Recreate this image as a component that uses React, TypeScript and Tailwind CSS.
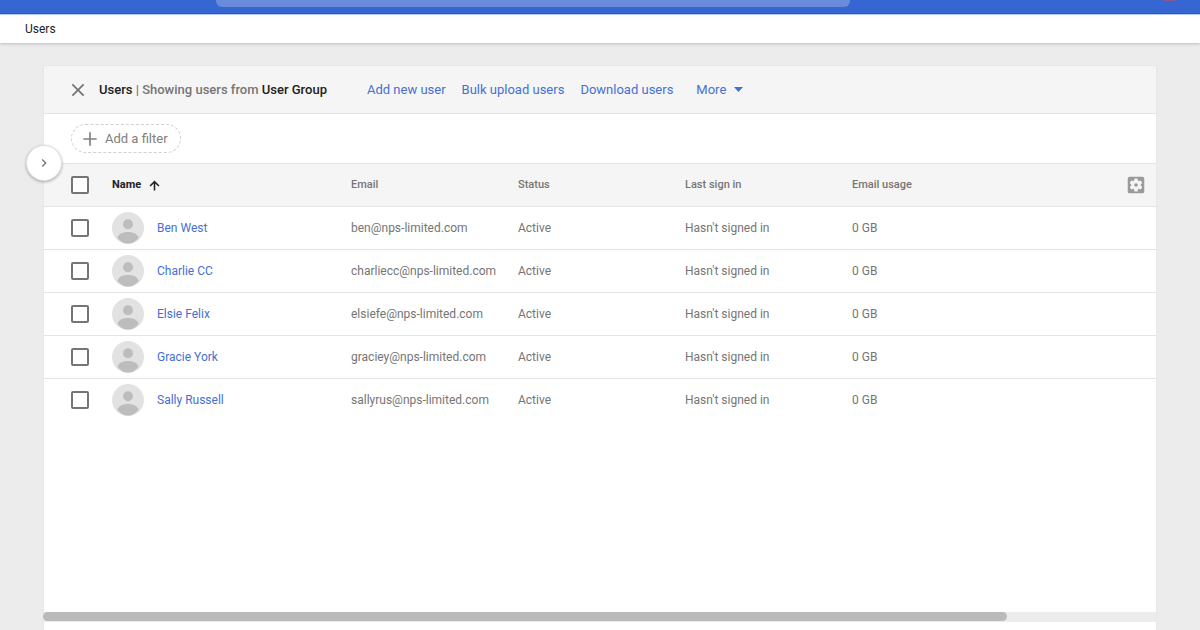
import { useState } from 'react';

type User = { name: string; email: string };

const users: User[] = [
  { name: 'Ben West', email: 'ben@nps-limited.com' },
  { name: 'Charlie CC', email: 'charliecc@nps-limited.com' },
  { name: 'Elsie Felix', email: 'elsiefe@nps-limited.com' },
  { name: 'Gracie York', email: 'graciey@nps-limited.com' },
  { name: 'Sally Russell', email: 'sallyrus@nps-limited.com' },
];

const actions = ['Add new user', 'Bulk upload users', 'Download users'];

function Icon({ d, className }: { d: string; className: string }) {
  return (
    <svg viewBox="0 0 24 24" fill="currentColor" aria-hidden="true" className={className}>
      <path d={d} />
    </svg>
  );
}

const CLOSE = 'M19.500 6L18 4.500l-6 6-6-6L4.500 6l6 6-6 6L6 19.500l6-6 6 6 1.500-1.500-6-6z';
const PLUS = 'M20 13h-7v7h-2v-7H4v-2h7V4h2v7h7z';
const CHEVRON = 'M10 6L8.59 7.41 13.17 12l-4.58 4.59L10 18l6-6z';
const ARROW_UP = 'M4 12l1.750 1.750L10.750 8.750V20h2.500V8.750l5 5L20 12l-8-8-8 8z';
const GEAR =
  'M12 10a2 2 0 100 4 2 2 0 000-4zm7-7H5a2 2 0 00-2 2v14a2 2 0 002 2h14a2 2 0 002-2V5a2 2 0 00-2-2zm-1.75 9c0 .23-.02.46-.05.68l1.48 1.16c.13.11.17.3.08.45l-1.4 2.42c-.09.15-.27.21-.43.15l-1.74-.7c-.36.28-.76.51-1.18.69l-.26 1.85c-.03.17-.18.3-.35.3h-2.8c-.17 0-.32-.13-.35-.29l-.26-1.85c-.43-.18-.82-.41-1.18-.69l-1.74.7c-.16.06-.34 0-.43-.15l-1.4-2.42a.35.35 0 01.08-.45l1.48-1.16c-.03-.23-.05-.46-.05-.69s.02-.46.05-.68l-1.48-1.16a.35.35 0 01-.08-.45l1.4-2.42c.09-.15.27-.21.43-.15l1.74.7c.36-.28.76-.51 1.18-.69l.26-1.85c.03-.17.18-.3.35-.3h2.8c.17 0 .32.13.35.29l.26 1.85c.43.18.82.41 1.18.69l1.74-.7c.16-.06.34 0 .43.15l1.4 2.42c.09.15.05.34-.08.45l-1.48 1.16c.03.23.05.46.05.69z';

function Avatar() {
  return (
    <svg viewBox="0 0 32 32" aria-hidden="true" className="size-8 shrink-0">
      <circle cx="16" cy="16" r="16" fill="#e2e2e2" />
      <circle cx="16" cy="12.300" r="5" fill="#bdbdbd" />
      <path
        d="M5.500 26c.6-4 5.200-6 10.500-6s9.900 2 10.500 6c-2.600 3.500-6.300 5.600-10.500 5.600s-7.900-2.100-10.500-5.600z"
        fill="#bdbdbd"
      />
    </svg>
  );
}

function Checkbox({ label }: { label: string }) {
  return (
    <input
      type="checkbox"
      aria-label={label}
      className="block size-[18px] appearance-none rounded-xs border-2 border-[#757575] bg-white checked:bg-[#3367d6]"
    />
  );
}

export default function App() {
  const [query, setQuery] = useState('');
  return (
    <div className="flex min-h-screen flex-col bg-[#ececec] font-[Roboto,sans-serif] text-[#757575]">
      <header className="flex h-[14px] items-start justify-between border-b border-[#2a5bc4] bg-[#3666d1] pr-6 pl-[216px]">
        <input
          type="search"
          aria-label="Search"
          value={query}
          onChange={(e) => setQuery(e.target.value)}
          className="h-[7px] w-[634px] appearance-none rounded-b-md bg-[#698bdb] outline-none"
        />
        <span className="h-px w-3 rounded-b-full bg-[#8a5890]" />
      </header>
      <div className="flex h-[29px] items-center border-t border-[#b5cbf5] bg-white px-[25px] text-xs text-[#212121] shadow-[0_1px_3px_rgba(0,0,0,0.2)]">
        <h1>Users</h1>
      </div>

      <main className="relative mx-[43px] mt-[22px] flex flex-1 flex-col border-x border-t border-[#e8e8e8] bg-white">
        <button
          type="button"
          aria-label="Show side panel"
          className="absolute top-[79px] -left-[18px] flex size-9 items-center justify-center rounded-full border border-[#e0e0e0] bg-white shadow-[0_1px_3px_rgba(0,0,0,0.3)]"
        >
          <Icon d={CHEVRON} className="size-4" />
        </button>

        <div className="flex h-12 items-center border-b border-[#e4e4e4] bg-[#f5f5f5] pl-6">
          <button type="button" aria-label="Close">
            <Icon d={CLOSE} className="size-5" />
          </button>
          <h2 className="ml-[11px] text-[13px] font-medium whitespace-nowrap">
            <span className="text-[#212121]">Users</span> | Showing users from{' '}
            <span className="text-[#212121]">User Group</span>
          </h2>
          <nav className="ml-10 flex items-center gap-4 text-[13px] whitespace-nowrap text-[#4570d3]">
            {actions.map((action) => (
              <a key={action} href="#">
                {action}
              </a>
            ))}
            <button type="button" className="ml-[7px] flex items-center gap-2">
              More
              <svg viewBox="0 0 9 5" fill="currentColor" aria-hidden="true" className="h-[5px] w-[9px]">
                <path d="M0 0h9L4.500 5z" />
              </svg>
            </button>
          </nav>
        </div>

        <div className="flex h-[49px] items-center pl-[27px]">
          <button
            type="button"
            className="flex h-[29px] items-center gap-[5px] rounded-full border border-dashed border-[#d0d0d0] pr-3 pl-2 text-[13px] text-[#808080]"
          >
            <Icon d={PLUS} className="size-5" />
            Add a filter
          </button>
        </div>

        <table className="w-full table-fixed border-collapse text-left text-xs">
          <colgroup>
            <col className="w-[68px]" />
            <col className="w-[239px]" />
            <col className="w-[167px]" />
            <col className="w-[167px]" />
            <col className="w-[167px]" />
            <col />
            <col className="w-[30px]" />
          </colgroup>
          <thead>
            <tr className="h-[43px] border-y border-[#e4e4e4] bg-[#f5f5f5]">
              <th className="pl-[27px]">
                <Checkbox label="Select all users" />
              </th>
              <th>
                <button type="button" className="flex items-center gap-[6px] text-[11px] font-bold text-[#212121]">
                  Name
                  <Icon d={ARROW_UP} className="size-[15px]" />
                </button>
              </th>
              <th className="text-[11px] font-medium">Email</th>
              <th className="text-[11px] font-medium">Status</th>
              <th className="text-[11px] font-medium">Last sign in</th>
              <th className="text-[11px] font-medium">Email usage</th>
              <th>
                <button type="button" aria-label="Manage columns" className="block">
                  <Icon d={GEAR} className="-ml-px size-[22px] text-[#9a9a9a]" />
                </button>
              </th>
            </tr>
          </thead>
          <tbody>
            {users.map((user) => (
              <tr key={user.email} className="h-[43px] border-b border-[#e4e4e4] last:border-b-0">
                <td className="pl-[27px]">
                  <Checkbox label={`Select ${user.name}`} />
                </td>
                <td>
                  <div className="flex items-center gap-[13px]">
                    <Avatar />
                    <a href="#" className="text-[#4570d3]">
                      {user.name}
                    </a>
                  </div>
                </td>
                <td>{user.email}</td>
                <td>Active</td>
                <td>Hasn't signed in</td>
                <td>0 GB</td>
                <td />
              </tr>
            ))}
          </tbody>
        </table>

        <div className="mt-auto mb-2 h-[10px] bg-[#ececec]">
          <div className="-ml-px h-[9px] w-13/15 rounded-full bg-[#bababa]" />
        </div>
      </main>
    </div>
  );
}
